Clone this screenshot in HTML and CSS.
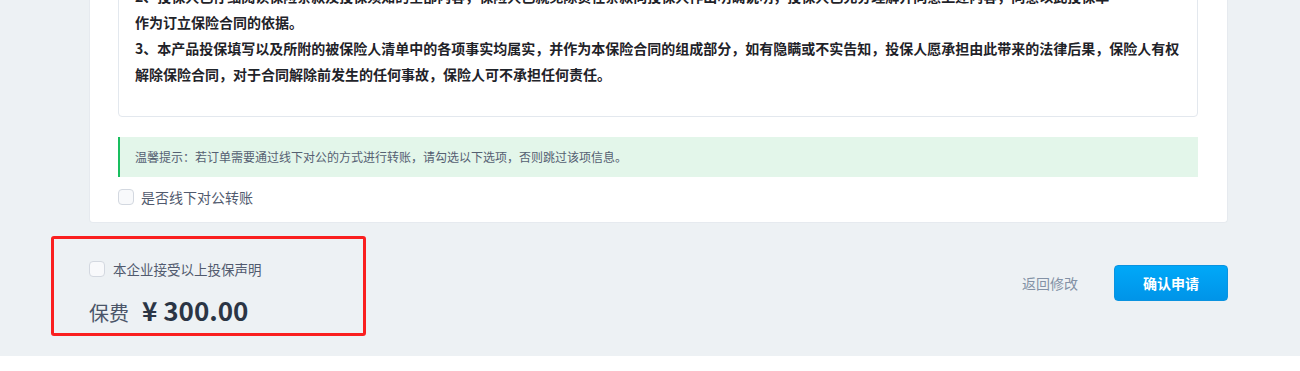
FILE: index.html
```html
<!DOCTYPE html>
<html lang="zh-CN">
<head>
<meta charset="utf-8">
<title>投保声明</title>
<link rel="stylesheet" href="styles.css">
</head>
<body>
<div class="page">
  <section class="card">
    <div class="terms">
      <p>2、投保人已仔细阅读保险条款及投保须知的全部内容，保险人已就免除责任条款向投保人作出明确说明，投保人已充分理解并同意上述内容，同意以此投保单</p>
      <p>作为订立保险合同的依据。</p>
      <p>3、本产品投保填写以及所附的被保险人清单中的各项事实均属实，并作为本保险合同的组成部分，如有隐瞒或不实告知，投保人愿承担由此带来的法律后果，保险人有权解除保险合同，对于合同解除前发生的任何事故，保险人可不承担任何责任。</p>
    </div>
    <div class="tip">温馨提示：若订单需要通过线下对公的方式进行转账，请勾选以下选项，否则跳过该项信息。</div>
    <label class="check-row">
      <span class="checkbox"></span>
      <span class="check-label">是否线下对公转账</span>
    </label>
  </section>

  <footer class="footer">
    <div class="summary">
      <label class="check-row small">
        <span class="checkbox"></span>
        <span class="check-label">本企业接受以上投保声明</span>
      </label>
      <div class="price">
        <span class="price-label">保费</span>
        <span class="price-value">¥ 300.00</span>
      </div>
    </div>
    <div class="actions">
      <a class="back-link">返回修改</a>
      <button class="btn-primary">确认申请</button>
    </div>
  </footer>
</div>
</body>
</html>
```

FILE: styles.css
```css
*, *::before, *::after {
  box-sizing: border-box;
}

html, body {
  margin: 0;
  padding: 0;
  background: #ffffff;
  font-family: "Noto Sans CJK SC", "Noto Sans", sans-serif;
}

.page {
  background: #edf1f4;
  margin-top: -49px;
}

.card {
  margin: 0 72px 0 89px;
  background: #ffffff;
  border: 1px solid #e6eaef;
  border-top: none;
  border-radius: 0 0 4px 4px;
  padding: 21px 29px 15px 28px;
}

.terms {
  border: 1px solid #e3e8ee;
  border-radius: 4px;
  padding: 10px 16px 29px 16px;
}

.terms p {
  margin: 0;
  font-size: 14px;
  line-height: 26px;
  font-weight: bold;
  color: #1f2329;
}

.tip {
  margin-top: 20px;
  height: 40px;
  line-height: 40px;
  padding: 0 15px;
  background: #e3f6ea;
  border-left: 2px solid #19be5f;
  font-size: 12px;
  color: #556072;
}

.check-row {
  display: flex;
  align-items: center;
  gap: 7px;
  margin-top: 10px;
  height: 20px;
}

.checkbox {
  width: 16px;
  height: 16px;
  border: 1px solid #d3d8e0;
  border-radius: 4px;
  background: #f8f9fb;
  flex: none;
}

.check-label {
  font-size: 14px;
  color: #515a6e;
  line-height: 20px;
}

.footer {
  height: 133px;
  padding: 36px 72px 0 89px;
  display: flex;
  justify-content: space-between;
  align-items: flex-start;
}

.summary {
  position: relative;
}

.summary::after {
  content: "";
  position: absolute;
  left: -38px;
  top: -23px;
  width: 315px;
  height: 100px;
  border: 3px solid #fa1f1f;
  border-radius: 3px;
}

.check-row.small {
  margin-top: 0;
  gap: 8px;
}

.check-row.small .check-label {
  font-size: 13.5px;
}

.price {
  display: flex;
  align-items: baseline;
  gap: 13px;
  margin-top: 13px;
  line-height: 36px;
}

.price-label {
  font-size: 20px;
  color: #4a5568;
}

.price-value {
  font-size: 26px;
  font-weight: bold;
  color: #2b3545;
  white-space: pre;
}

.actions {
  display: flex;
  align-items: center;
  gap: 36px;
  padding-top: 6px;
}

.back-link {
  font-size: 14px;
  color: #8391a5;
  cursor: pointer;
}

.btn-primary {
  width: 114px;
  height: 36px;
  border: 1px solid #0a93e0;
  border-radius: 4px;
  background: linear-gradient(#00a8f8, #0094e8);
  color: #ffffff;
  font-family: inherit;
  font-size: 14px;
  font-weight: bold;
  padding: 0;
}
```
